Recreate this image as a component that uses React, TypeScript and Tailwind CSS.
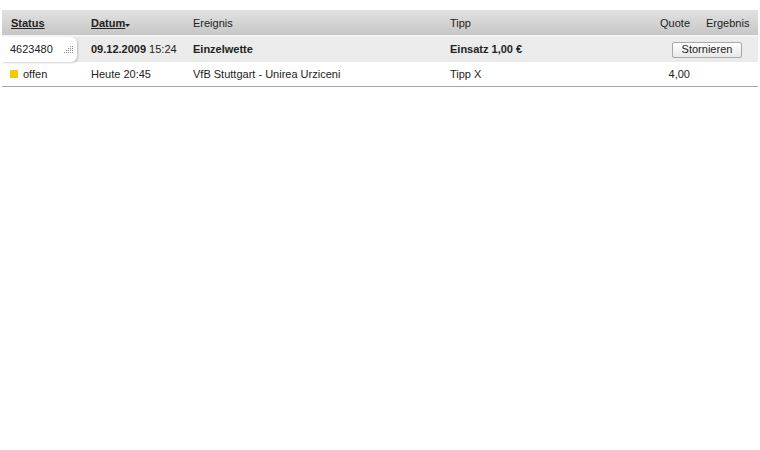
import React from "react";

const font = { fontFamily: "'Liberation Sans', Arial, sans-serif" };

function Grip() {
  return (
    <svg width="11" height="9" viewBox="0 0 11 9" className="shrink-0">
      {[0, 1, 2, 3].map((r) =>
        Array.from({ length: r + 2 }).map((_, c) => (
          <rect key={`${r}-${c}`} x={10 - c * 2} y={r * 2 + 1} width="1" height="1" fill="#8a8a8a" />
        ))
      )}
    </svg>
  );
}

export default function App() {
  return (
    <div className="w-[760px] h-[450px] bg-white text-[11px] text-[#222] whitespace-nowrap" style={font}>
      <div className="pt-[10px] pl-[2px] pr-[2px]">
        {/* header */}
        <div className="flex h-[25px] pt-[1px] items-center bg-gradient-to-b from-[#e2e2e2] to-[#c6c6c6] text-[#222]">
          <div className="w-[80px] pl-[9px] font-bold underline">Status</div>
          <div className="w-[102px] pl-[9px] font-bold underline flex items-center">
            Datum
            <svg width="5" height="3" viewBox="0 0 5 3" className="mt-[4px]">
              <path d="M0 0h5L2.5 3z" fill="#222" />
            </svg>
          </div>
          <div className="w-[257px] pl-[9px]">Ereignis</div>
          <div className="w-[211px] pl-[9px]">Tipp</div>
          <div className="w-[38px] text-right">Quote</div>
          <div className="flex-1 pl-[16px]">Ergebnis</div>
        </div>
        <div className="h-[2px] bg-[#f4f4f4]" />
        {/* bet row */}
        <div className="flex h-[25px] items-center bg-[#ebebeb]">
          <div className="w-[75px] h-[25px] bg-white rounded-r-[6px] shadow-[1px_1px_2px_rgba(0,0,0,0.18)] flex items-center justify-between pl-[8px] pr-[4px]">
            <span>4623480</span>
            <Grip />
          </div>
          <div className="w-[107px] pl-[14px]">
            <span className="font-bold">09.12.2009</span> 15:24
          </div>
          <div className="w-[257px] pl-[9px] font-bold">Einzelwette</div>
          <div className="w-[231px] pl-[9px] font-bold">Einsatz 1,00 €</div>
          <button className="h-[16px] w-[70px] border border-[#a8a8a8] rounded-[2px] bg-gradient-to-b from-white to-[#e8e8e8] text-[11px] text-[#222] leading-none">
            Stornieren
          </button>
        </div>
        {/* selection row */}
        <div className="flex h-[25px] items-center border-b border-[#a6a6a6]">
          <div className="w-[80px] pl-[8px] flex items-center gap-[5px]">
            <span className="w-[8px] h-[8px] bg-[#f6c800]" />
            <span>offen</span>
          </div>
          <div className="w-[102px] pl-[9px]">Heute 20:45</div>
          <div className="w-[257px] pl-[9px]">VfB Stuttgart - Unirea Urziceni</div>
          <div className="w-[211px] pl-[9px]">Tipp X</div>
          <div className="w-[38px] text-right">4,00</div>
          <div className="flex-1" />
        </div>
      </div>
    </div>
  );
}
